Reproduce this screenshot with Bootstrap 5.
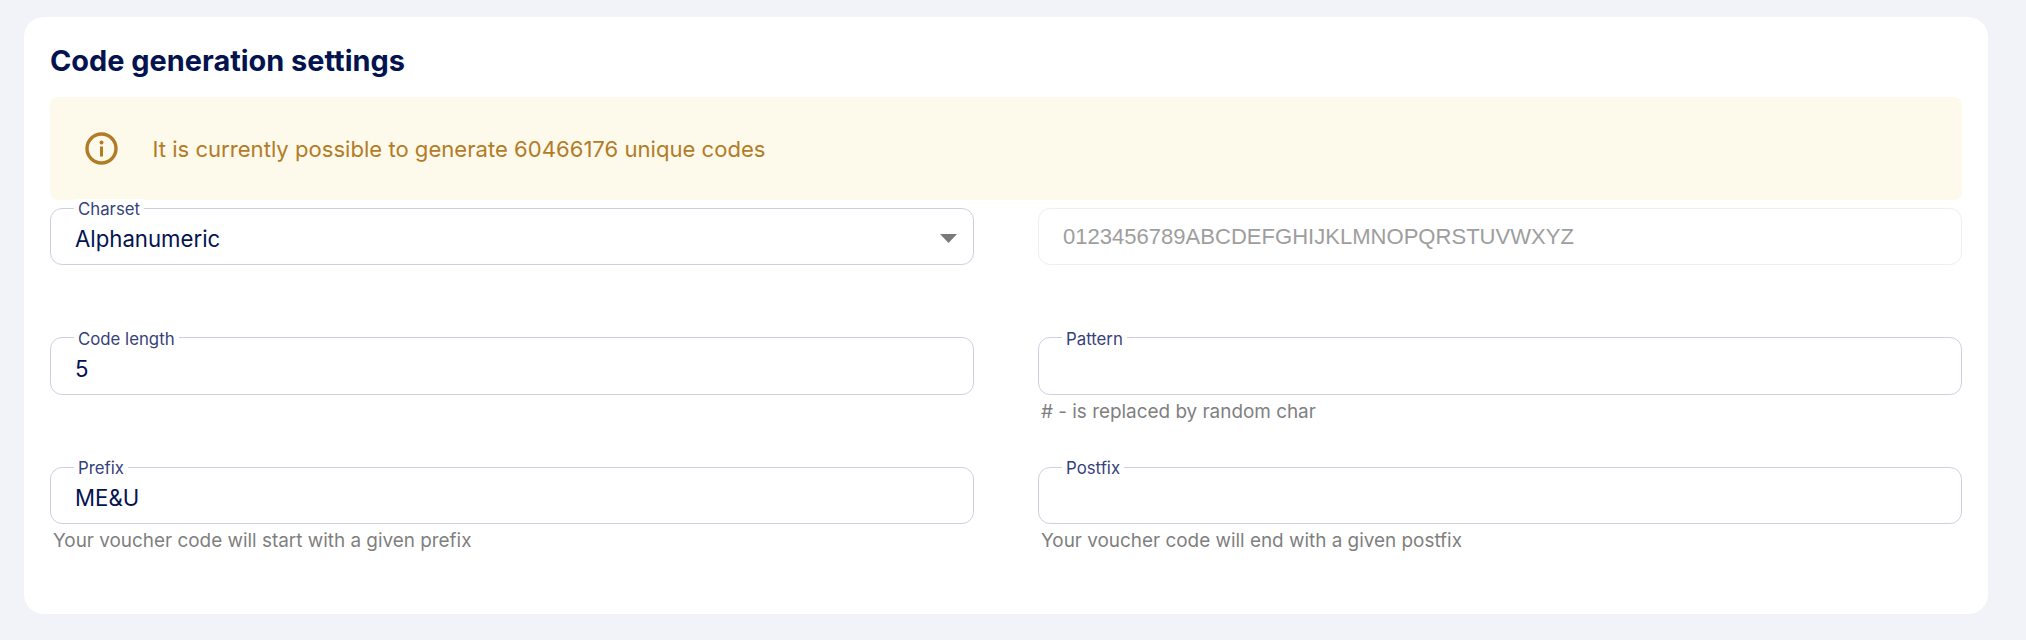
<!DOCTYPE html>
<html lang="en">
<head>
    <meta charset="UTF-8">
    <meta name="viewport" content="width=device-width, initial-scale=1.0">
    <title>Code generation settings</title>
    <link href="https://cdn.jsdelivr.net/npm/bootstrap@5.3.0/dist/css/bootstrap.min.css" rel="stylesheet">
    <style>
        body {
            background-color: #f2f3f8;
            font-family: Inter, "Liberation Sans", sans-serif;
            color: #03134f;
        }

        .page-wrap {
            padding: 17px 38px 26px 24px;
        }

        .settings-card {
            background-color: #ffffff;
            border-radius: 20px;
            padding: 27px 26px 0;
            height: 597px;
        }

        .settings-title {
            font-size: 28.900px;
            line-height: 34px;
            font-weight: 700;
            color: #03134f;
            margin: 0 0 19px;
        }

        .code-alert {
            background-color: #fdf9eb;
            color: #b27c27;
            border-radius: 8px;
            height: 103px;
            padding-left: 35px;
            padding-top: 2px;
            font-size: 22.100px;
            gap: 34.500px;
            margin-bottom: 8px;
        }

        .code-alert svg {
            width: 33px;
            height: 33px;
            margin-top: -3px;
        }

        .field-row {
            --bs-gutter-x: 64px;
            --bs-gutter-y: 0;
        }

        .field-cell {
            height: 129.400px;
        }

        .field-box {
            position: relative;
        }

        .field-box .form-control,
        .field-box .form-select {
            height: 57.300px;
            border: 1px solid #cfcfe2;
            border-radius: 12px;
            padding: 4px 24px 0;
            font-size: 22.200px;
            color: #03134f;
            box-shadow: none;
        }

        .field-box .form-select {
            background-image: none;
        }

        .field-box .form-control:disabled {
            background-color: #ffffff;
            border-color: #eeeef4;
            padding-top: 0;
            font-family: "Liberation Sans", Arial, sans-serif;
            font-size: 22.050px;
            color: #9e9e9e;
            opacity: 1;
        }

        .field-label {
            position: absolute;
            top: -8.700px;
            left: 24px;
            padding: 0 4px;
            background-color: #ffffff;
            font-size: 16.800px;
            line-height: 20px;
            color: #35427b;
        }

        .select-arrow {
            position: absolute;
            top: 26px;
            right: 17px;
            width: 17px;
            height: 9px;
            pointer-events: none;
        }

        .field-hint {
            font-size: 18.900px;
            line-height: 24px;
            color: #7f7f7f;
            padding: 5px 3px 0;
        }
    </style>
</head>
<body>
<div class="page-wrap">
    <div class="settings-card">
        <h2 class="settings-title">Code generation settings</h2>

        <div class="code-alert d-flex align-items-center">
            <svg viewBox="0 0 33 33" fill="none">
                <circle cx="16.500" cy="16.500" r="14.500" stroke="#b27c27" stroke-width="3.400"/>
                <circle cx="16.500" cy="10.500" r="2" fill="#b27c27"/>
                <rect x="15" y="14.500" width="3" height="10" fill="#b27c27"/>
            </svg>
            <span>It is currently possible to generate 60466176 unique codes</span>
        </div>

        <div class="row field-row">
            <div class="col-6 field-cell">
                <div class="field-box">
                    <label class="field-label" for="charset">Charset</label>
                    <select class="form-select" id="charset">
                        <option>Alphanumeric</option>
                    </select>
                    <svg class="select-arrow" viewBox="0 0 17 9"><path d="M0 0h17l-8.500 9z" fill="#7a7a7a"/></svg>
                </div>
            </div>
            <div class="col-6 field-cell">
                <div class="field-box">
                    <input class="form-control" type="text" disabled value="0123456789ABCDEFGHIJKLMNOPQRSTUVWXYZ">
                </div>
            </div>

            <div class="col-6 field-cell">
                <div class="field-box">
                    <label class="field-label" for="codeLength">Code length</label>
                    <input class="form-control" id="codeLength" type="text" value="5">
                </div>
            </div>
            <div class="col-6 field-cell">
                <div class="field-box">
                    <label class="field-label" for="pattern">Pattern</label>
                    <input class="form-control" id="pattern" type="text">
                </div>
                <div class="field-hint"># - is replaced by random char</div>
            </div>

            <div class="col-6 field-cell">
                <div class="field-box">
                    <label class="field-label" for="prefix">Prefix</label>
                    <input class="form-control" id="prefix" type="text" value="ME&amp;U">
                </div>
                <div class="field-hint">Your voucher code will start with a given prefix</div>
            </div>
            <div class="col-6 field-cell">
                <div class="field-box">
                    <label class="field-label" for="postfix">Postfix</label>
                    <input class="form-control" id="postfix" type="text">
                </div>
                <div class="field-hint">Your voucher code will end with a given postfix</div>
            </div>
        </div>
    </div>
</div>
<script src="https://cdn.jsdelivr.net/npm/bootstrap@5.3.0/dist/js/bootstrap.bundle.min.js"></script>
</body>
</html>
